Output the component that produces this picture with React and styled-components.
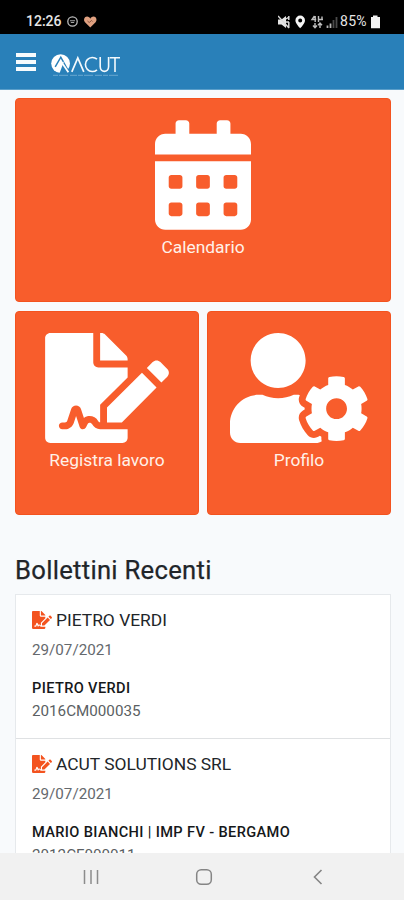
import React from "react";
import styled, { createGlobalStyle } from "styled-components";
import { FaCalendarAlt, FaFileSignature, FaUserCog } from "react-icons/fa";

const GlobalStyle = createGlobalStyle`
  * { box-sizing: border-box; }
  body { margin: 0; background: #f8fafc; font-family: Roboto, "Liberation Sans", sans-serif; }
`;

const Screen = styled.div`
  width: 404px;
  height: 900px;
  display: flex;
  flex-direction: column;
  overflow: hidden;
  background: #f8fafc;
`;

const StatusBar = styled.div`
  flex: none;
  height: 34px;
  padding: 8px 23px 0 26px;
  display: flex;
  justify-content: space-between;
  background: #000;
  color: #e6e6e6;
  font-size: 14px;
  line-height: 27px;
`;

const StatusGroup = styled.div`
  display: flex;
  align-items: center;
  height: 27px;
`;

const StatusText = styled.span`
  display: block;
  width: ${(p) => p.$width};
  font-weight: ${(p) => p.$weight || 500};
  font-size: 14px;
  white-space: nowrap;
  letter-spacing: ${(p) => p.$spacing || "0"};
`;

const Header = styled.header`
  flex: none;
  height: 56px;
  padding: 0 16px;
  display: flex;
  align-items: flex-start;
  background: #2980b9;
  border-bottom: 1px solid #5b9fca;
`;

const MenuButton = styled.button`
  margin: 19px 0 0;
  padding: 0;
  width: 20px;
  height: 18px;
  border: 0;
  background: none;
  display: flex;
  flex-direction: column;
  justify-content: space-between;
`;

const MenuLine = styled.span`
  height: 4px;
  width: 20px;
  background: #f7fbfd;
`;

const Logo = styled.svg`
  display: block;
  margin: 19px 0 0 15px;
`;

const Content = styled.main`
  flex: 1;
  min-height: 0;
  overflow: hidden;
  padding: 7.5px 13px 0 15px;
`;

const Tiles = styled.section`
  display: grid;
  grid-template-columns: 184px 184px;
  grid-auto-rows: 204px;
  gap: 9px 8px;
`;

const Tile = styled.a`
  grid-column: ${(p) => (p.$wide ? "1 / -1" : "auto")};
  padding-top: 21.5px;
  display: flex;
  flex-direction: column;
  align-items: center;
  border-radius: 4px;
  background: #f85d2c;
  border: 1px solid #f3531f;
  color: #fff;

  svg {
    display: block;
    height: 110px;
    width: ${(p) => p.$iconWidth}px;
  }
`;

const TileLabel = styled.span`
  margin-top: 6px;
  font-size: 17.4px;
  line-height: 22px;
  color: #fff1e8;
`;

const Heading = styled.h2`
  margin: 39.5px 0 7.5px;
  font-size: 25.6px;
  line-height: 32px;
  font-weight: 400;
  letter-spacing: 0.3px;
  color: #212529;
  -webkit-text-stroke: 0.25px #212529;
`;

const List = styled.div`
  width: 376px;
  border: 1px solid #e6e9ec;
  background: #fff;
`;

const Item = styled.article`
  height: 144px;
  padding: 13.5px 16px 0;
  border-bottom: 1px solid #dfe1e3;
`;

const ItemTitle = styled.div`
  display: flex;
  align-items: center;
  gap: 4px;
  height: 24px;
  font-size: 17.4px;
  color: #212529;

  svg {
    width: 20px;
    height: 18px;
    color: #f3531f;
  }
`;

const ItemDate = styled.div`
  margin-top: 7px;
  font-size: 15.2px;
  line-height: 22px;
  color: #65696d;
`;

const ItemName = styled.div`
  margin-top: 16px;
  font-size: 14.6px;
  line-height: 22px;
  font-weight: 500;
  letter-spacing: 0.36px;
  color: #16181a;
`;

const ItemCode = styled.div`
  margin-top: 0.5px;
  font-size: 15.2px;
  line-height: 22px;
  color: #5b5f63;
`;

const NavBar = styled.nav`
  flex: none;
  height: 47px;
  display: flex;
  align-items: center;
  gap: 95px;
  padding-left: 82px;
  background: #f1f1f1;

  svg { display: block; }
`;

const BackIcon = styled.svg`
  margin-left: 4px;
`;

const items = [
  { title: "PIETRO VERDI", date: "29/07/2021", name: "PIETRO VERDI", code: "2016CM000035" },
  { title: "ACUT SOLUTIONS SRL", date: "29/07/2021", name: "MARIO BIANCHI | IMP FV - BERGAMO", code: "2012CF000011" },
];

function StatusIconsLeft() {
  return (
    <svg width="34" height="14" viewBox="0 0 34 14">
      <circle cx="6.5" cy="6.5" r="4.7" fill="none" stroke="#bdbdbd" strokeWidth="1.3" />
      <path d="M4 5.7h5M4.8 7.5h3.4" stroke="#a5a5a5" strokeWidth="1.1" fill="none" />
      <path d="M24.3 12.6L19 7.3C17.1 5.1 18.4 1.6 21 1.6C22.7 1.6 23.8 2.7 24.3 3.7C24.8 2.7 25.9 1.6 27.6 1.6C30.2 1.6 31.5 5.1 29.6 7.3Z" fill="#dfa080" />
      <path d="M21.5 6l1.7 1.5 2.4-2 1 1" fill="none" stroke="#8a5540" strokeWidth="1" />
    </svg>
  );
}

function StatusIconsRight() {
  return (
    <svg width="62" height="14" viewBox="0 0 62 14">
      <path d="M0 4.5h3.5L8 1v12L3.5 9.5H0z" fill="#e4e4e4" />
      <path d="M0 1l11 12M10.8 1v4M10.8 7v6M8 4l3-2M8 7h3" stroke="#d8d8d8" strokeWidth="1.5" fill="none" />
      <path fillRule="evenodd" d="M22.2.6a4.8 4.8 0 0 0-4.8 4.8c0 3.2 4.8 7.8 4.8 7.8s4.8-4.6 4.8-7.8A4.8 4.8 0 0 0 22.2.6zm0 3a2 2 0 1 1 0 4 2 2 0 0 1 0-4z" fill="#f5f5f5" />
      <path d="M36.5 1L34 4.5h4.2M37.2 1v6M40.5 1v6M40.5 4.5H45M44 1.5v3M37 8v5M35 10.5l2 2.3 2-2.3M42 13V8M40 10.2L42 8l2 2.2" stroke="#bebebe" strokeWidth="1.4" fill="none" />
      <path d="M49.5 10.5v2.5M52.5 8.5V13" stroke="#b5b5b5" strokeWidth="1.8" />
      <path d="M55.5 5v8M58.5 2v11" stroke="#4a4a4a" strokeWidth="1.8" />
    </svg>
  );
}

function AcutLogo() {
  return (
    <Logo width="70" height="26" viewBox="0 0 70 26">
      <circle cx="9.6" cy="10.6" r="9.4" fill="#fff" />
      <path d="M4.2 13.8L9.8 4.2L12.4 8.8" fill="none" stroke="#2980b9" strokeWidth="1.5" />
      <path d="M8.4 20.4L13 8.6L19 19.5Q14 22.5 8.4 20.4Z" fill="#2980b9" />
      <path d="M10.6 9.2L17.4 19.2" stroke="#fff" strokeWidth="1.8" />
      <path d="M20.8 18.8L26.8 4.8L32.8 18.8" fill="none" stroke="#f3f9fd" strokeWidth="1.7" />
      <path d="M46 6.2A7 7 0 1 0 46 16.8" fill="none" stroke="#f3f9fd" strokeWidth="1.6" />
      <path d="M49.2 4V13.5C49.2 20 57.6 20 57.6 13.5V4" fill="none" stroke="#f3f9fd" strokeWidth="1.6" />
      <path d="M58.8 4.7H69M64 4.7V19" fill="none" stroke="#f3f9fd" strokeWidth="1.6" />
      <path d="M2 22.3H69" stroke="#78b0d5" strokeWidth=".8" strokeDasharray="5 1 9 2 7 1" />
    </Logo>
  );
}

export default function App() {
  return (
    <Screen>
      <GlobalStyle />
      <StatusBar>
        <StatusGroup>
          <StatusText $width="40px">12:26</StatusText>
          <StatusIconsLeft />
        </StatusGroup>
        <StatusGroup>
          <StatusIconsRight />
          <StatusText $weight={400} $width="30px" $spacing="0.3px">85%</StatusText>
          <svg width="11" height="14" viewBox="0 0 11 14">
            <path d="M3 .5h4.5V2H10v11.2H1V2h2z" fill="#f3f3f3" />
          </svg>
        </StatusGroup>
      </StatusBar>
      <Header>
        <MenuButton aria-label="Menu">
          <MenuLine />
          <MenuLine />
          <MenuLine />
        </MenuButton>
        <AcutLogo />
      </Header>
      <Content>
        <Tiles>
          <Tile $wide $iconWidth={96}>
            <FaCalendarAlt />
            <TileLabel>Calendario</TileLabel>
          </Tile>
          <Tile $iconWidth={124}>
            <FaFileSignature />
            <TileLabel>Registra lavoro</TileLabel>
          </Tile>
          <Tile $iconWidth={137.5}>
            <FaUserCog />
            <TileLabel>Profilo</TileLabel>
          </Tile>
        </Tiles>
        <Heading>Bollettini Recenti</Heading>
        <List>
          {items.map((item) => (
            <Item key={item.title}>
              <ItemTitle>
                <FaFileSignature />
                {item.title}
              </ItemTitle>
              <ItemDate>{item.date}</ItemDate>
              <ItemName>{item.name}</ItemName>
              <ItemCode>{item.code}</ItemCode>
            </Item>
          ))}
        </List>
      </Content>
      <NavBar>
        <svg width="18" height="18" viewBox="0 0 18 18">
          <path d="M2.5 2v14M9 2v14M15.5 2v14" stroke="#8c8c8c" strokeWidth="1.5" />
        </svg>
        <svg width="18" height="18" viewBox="0 0 18 18">
          <rect x="1.7" y="1.7" width="14.6" height="14.6" rx="4.5" fill="none" stroke="#858585" strokeWidth="1.5" />
        </svg>
        <BackIcon width="12" height="18" viewBox="0 0 12 18">
          <path d="M9.5 2L2.5 9l7 7" fill="none" stroke="#858585" strokeWidth="1.6" />
        </BackIcon>
      </NavBar>
    </Screen>
  );
}
